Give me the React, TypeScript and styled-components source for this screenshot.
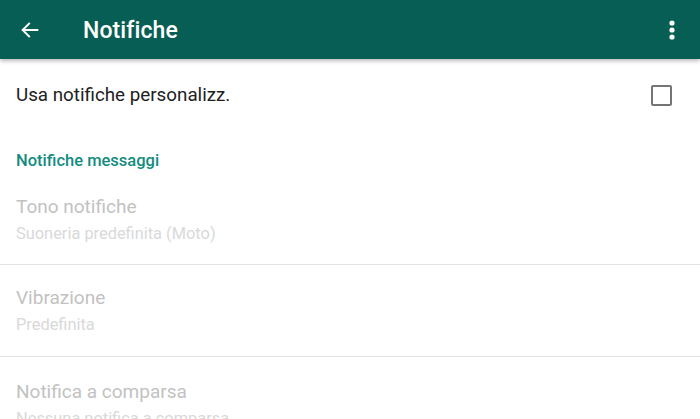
import React from "react";
import styled, { createGlobalStyle } from "styled-components";

const Global = createGlobalStyle`
  html, body { margin: 0; padding: 0; background: #ffffff; }
  body { font-family: Roboto, "Noto Sans", Arial, sans-serif; -webkit-font-smoothing: antialiased; }
  #root { width: 700px; height: 419px; overflow: hidden; }
`;

const Screen = styled.div`
  width: 700px;
  height: 419px;
  display: flex;
  flex-direction: column;
  background: #ffffff;
  overflow: hidden;
`;

const AppBar = styled.header`
  height: 59px;
  flex: 0 0 59px;
  background: #075e54;
  display: flex;
  align-items: center;
  padding: 0 24px 0 19px;
  box-shadow: 0 2px 4px rgba(0, 0, 0, 0.28);
  position: relative;
  z-index: 1;
`;

const IconButton = styled.button`
  background: none;
  border: 0;
  padding: 0;
  margin: 0;
  display: flex;
  align-items: center;
  justify-content: center;
  color: #ffffff;
  cursor: pointer;
`;

const Title = styled.h1`
  margin: 0 0 0 42px;
  flex: 1;
  font-size: 23px;
  font-weight: 500;
  color: #ffffff;
  letter-spacing: 0.1px;
  line-height: 1;
  padding-top: 2px;
`;

const Content = styled.main`
  display: flex;
  flex-direction: column;
`;

const CheckRow = styled.div`
  display: flex;
  align-items: center;
  justify-content: space-between;
  height: 72px;
  padding: 0 28px 0 16px;
`;

const RowLabel = styled.span`
  font-size: 18.8px;
  color: #212121;
`;

const Checkbox = styled.span`
  width: 17px;
  height: 17px;
  border: 2.5px solid #757575;
  border-radius: 2px;
  display: block;
`;

const SectionHeader = styled.div`
  font-size: 16.5px;
  font-weight: 500;
  color: #128c7e;
  padding: 20px 16px 0;
  height: 40px;
  box-sizing: border-box;
  line-height: 20px;
`;

const Item = styled.div<{ $last?: boolean }>`
  display: flex;
  flex-direction: column;
  padding: 0 16px;
  height: 92px;
  box-sizing: border-box;
  justify-content: center;
  border-bottom: ${(p) => (p.$last ? "none" : "1.5px solid #e3e3e3")};
  flex: 0 0 auto;
`;

const FirstItem = styled(Item)`
  height: 94px;
  padding-top: 4px;
`;

const ItemTitle = styled.div`
  font-size: 19px;
  color: #c2c2c2;
  line-height: 24px;
`;

const ItemSub = styled.div`
  font-size: 16.4px;
  color: #d9d9d9;
  line-height: 22px;
  margin-top: 4px;
`;

const LastItem = styled(Item)`
  justify-content: flex-start;
  padding-top: 23px;
`;

export default function App() {
  return (
    <>
      <Global />
      <Screen>
        <AppBar>
          <IconButton aria-label="Indietro">
            <svg width="22" height="22" viewBox="0 0 24 24" fill="none">
              <path d="M20 12H4.5M11 5l-7 7 7 7" stroke="#fff" strokeWidth="2.2" strokeLinecap="square" />
            </svg>
          </IconButton>
          <Title>Notifiche</Title>
          <IconButton aria-label="Altro">
            <svg width="8" height="24" viewBox="0 0 8 24">
              <circle cx="4" cy="5" r="2.6" fill="#fff" />
              <circle cx="4" cy="12" r="2.6" fill="#fff" />
              <circle cx="4" cy="19" r="2.6" fill="#fff" />
            </svg>
          </IconButton>
        </AppBar>
        <Content>
          <CheckRow>
            <RowLabel>Usa notifiche personalizz.</RowLabel>
            <Checkbox />
          </CheckRow>
          <SectionHeader>Notifiche messaggi</SectionHeader>
          <FirstItem>
            <ItemTitle>Tono notifiche</ItemTitle>
            <ItemSub>Suoneria predefinita (Moto)</ItemSub>
          </FirstItem>
          <Item>
            <ItemTitle>Vibrazione</ItemTitle>
            <ItemSub>Predefinita</ItemSub>
          </Item>
          <LastItem $last>
            <ItemTitle>Notifica a comparsa</ItemTitle>
            <ItemSub>Nessuna notifica a comparsa</ItemSub>
          </LastItem>
        </Content>
      </Screen>
    </>
  );
}
